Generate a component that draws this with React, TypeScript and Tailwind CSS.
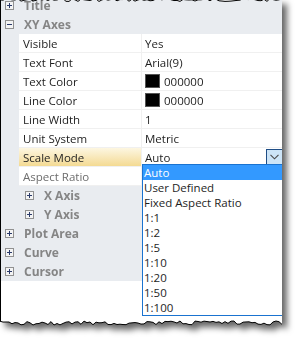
import React from 'react';

type Row =
  | { kind: 'group'; label: string; open: boolean; indent?: boolean }
  | { kind: 'prop'; name: string; value?: string; swatch?: boolean; active?: boolean; disabled?: boolean; combo?: boolean };

const ROWS: Row[] = [
  { kind: 'group', label: 'Title', open: false },
  { kind: 'group', label: 'XY Axes', open: true },
  { kind: 'prop', name: 'Visible', value: 'Yes' },
  { kind: 'prop', name: 'Text Font', value: 'Arial(9)' },
  { kind: 'prop', name: 'Text Color', value: '000000', swatch: true },
  { kind: 'prop', name: 'Line Color', value: '000000', swatch: true },
  { kind: 'prop', name: 'Line Width', value: '1' },
  { kind: 'prop', name: 'Unit System', value: 'Metric' },
  { kind: 'prop', name: 'Scale Mode', value: 'Auto', active: true, combo: true },
  { kind: 'prop', name: 'Aspect Ratio', value: '', disabled: true },
  { kind: 'group', label: 'X Axis', open: false, indent: true },
  { kind: 'group', label: 'Y Axis', open: false, indent: true },
  { kind: 'group', label: 'Plot Area', open: false },
  { kind: 'group', label: 'Curve', open: false },
  { kind: 'group', label: 'Cursor', open: false },
];

const OPCIONES = ['Auto', 'User Defined', 'Fixed Aspect Ratio', '1:1', '1:2', '1:5', '1:10', '1:20', '1:50', '1:100'];

// borde rasgado: puntos pseudo-aleatorios pero fijos
function rasgado(base: number, amp: number, seed: number) {
  const pts: [number, number][] = [];
  let s = seed;
  for (let x = 0; x <= 284; x += 3) {
    s = (s * 9301 + 49297) % 233280;
    const r = s / 233280;
    pts.push([x, base + (r - 0.5) * amp]);
  }
  return pts;
}

const TOP = rasgado(4, 3, 7);
const BOTTOM = rasgado(327, 4, 21);

function Caja({ open }: { open: boolean }) {
  return (
    <svg width="9" height="9" viewBox="0 0 9 9" className="shrink-0">
      <rect x="0.5" y="0.5" width="8" height="8" fill="#f4f4f4" stroke="#919191" />
      <line x1="2" y1="4.5" x2="7" y2="4.5" stroke="#2a3a6a" />
      {!open && <line x1="4.5" y1="2" x2="4.5" y2="7" stroke="#2a3a6a" />}
    </svg>
  );
}

export default function App() {
  const clip = [
    ...TOP.map(([x, y]) => `${x}px ${y}px`),
    ...[...BOTTOM].reverse().map(([x, y]) => `${x}px ${y}px`),
  ].join(', ');

  return (
    <div
      className="relative h-[344px] w-[297px] overflow-hidden bg-white text-[11.5px] leading-[15px] text-[#1e1e1e]"
      style={{ fontFamily: '"Open Sans", "Noto Sans", sans-serif' }}
    >
      <div className="relative w-[284px] drop-shadow-[5px_5px_3px_rgba(0,0,0,0.6)]">
        <div className="relative h-[331px] bg-white" style={{ clipPath: `polygon(${clip})` }}>
          <div className="-mt-[4px] h-[335px] border-x border-black bg-white">
            {ROWS.map((r, i) =>
              r.kind === 'group' ? (
                <div
                  key={i}
                  className={`flex h-[19px] items-center gap-[10px] bg-[#e9ecf0] text-[12px] font-bold text-[#858585] ${
                    r.indent ? 'pl-[24px]' : 'pl-[4px]'
                  }`}
                >
                  <Caja open={r.open} />
                  <span>{r.label}</span>
                </div>
              ) : (
                <div key={i} className="flex h-[19px]">
                  <div className="w-[18px] shrink-0 bg-[#e9ecf0]" />
                  <div
                    className={`flex w-[123px] shrink-0 items-center border-r border-b border-[#f0f0f0] pl-[4px] ${
                      r.active ? 'bg-gradient-to-b from-[#fdf6e1] to-[#f4da92]' : ''
                    } ${r.disabled ? 'text-[#6d6d6d]' : ''}`}
                  >
                    {r.name}
                  </div>
                  <div className="flex min-w-0 flex-1 items-center border-b border-[#f0f0f0] pl-[3px]">
                    {r.swatch && (
                      <span className="mr-[4px] h-[14px] w-[15px] border border-[#555] bg-black" />
                    )}
                    <span>{r.value}</span>
                    {r.combo && (
                      <span className="ml-auto flex h-[17px] w-[17px] items-center justify-center border border-[#1f4e86] bg-[#cce4f7]">
                        <svg width="9" height="6" viewBox="0 0 9 6">
                          <path d="M0.5 0.8 L4.5 4.8 L8.5 0.8" fill="none" stroke="#4a4a4a" strokeWidth="1.1" />
                        </svg>
                      </span>
                    )}
                  </div>
                </div>
              ),
            )}
          </div>
          <div className="absolute left-[142px] top-[168px] w-[141px] border border-[#1a73d0] bg-white">
            {OPCIONES.map((o, i) => (
              <div
                key={o}
                className={`flex h-[15px] items-center pl-[1px] ${i === 0 ? 'bg-[#3399ff] text-white' : ''}`}
              >
                {o}
              </div>
            ))}
          </div>
        </div>
        <svg className="absolute left-0 top-0" width="284" height="335">
          <polyline points={TOP.map(([x, y]) => `${x},${y}`).join(' ')} fill="none" stroke="#000" />
          <polyline points={BOTTOM.map(([x, y]) => `${x},${y}`).join(' ')} fill="none" stroke="#000" />
        </svg>
      </div>
    </div>
  );
}
